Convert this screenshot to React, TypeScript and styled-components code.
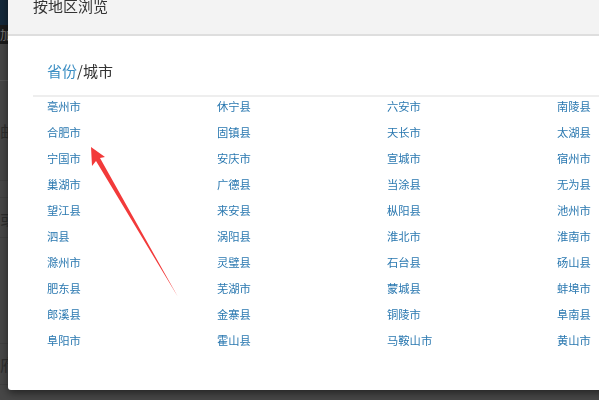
import styled, { createGlobalStyle } from 'styled-components';

const GlobalStyle = createGlobalStyle`
  html, body {
    margin: 0;
    padding: 0;
    width: 100%;
    height: 100%;
    overflow: hidden;
  }
  body {
    font-family: "Noto Sans CJK SC", "Noto Sans", sans-serif;
    background: #474747;
  }
`;

const cities: string[][] = [
  ['亳州市', '休宁县', '六安市', '南陵县'],
  ['合肥市', '固镇县', '天长市', '太湖县'],
  ['宁国市', '安庆市', '宣城市', '宿州市'],
  ['巢湖市', '广德县', '当涂县', '无为县'],
  ['望江县', '来安县', '枞阳县', '池州市'],
  ['泗县', '涡阳县', '淮北市', '淮南市'],
  ['滁州市', '灵璧县', '石台县', '砀山县'],
  ['肥东县', '芜湖市', '蒙城县', '蚌埠市'],
  ['郎溪县', '金寨县', '铜陵市', '阜南县'],
  ['阜阳市', '霍山县', '马鞍山市', '黄山市'],
];

// 모달 뒤에 깔린 페이지 (어둡게 덮인 상태)
const Backdrop = styled.div`
  display: flex;
  flex-direction: column;
  height: 100vh;
`;
const NavBar = styled.div`
  height: 25px;
  background: #14283a;
`;
const SubBar = styled.div`
  height: 19px;
  background: #1b1b1b;
  color: #777;
  font-size: 12px;
  line-height: 19px;
`;
const PageRow = styled.div<{ $h: number; $line?: string }>`
  height: ${({ $h }) => $h}px;
  border-bottom: 1px solid ${({ $line }) => $line || '#404040'};
  color: #2e2e2e;
  font-size: 16px;
  display: flex;
  align-items: center;
`;

const Modal = styled.div`
  position: fixed;
  left: 8px;
  top: -12px;
  width: 640px;
  height: 402px;
  background: #fff;
  border-radius: 0 0 0 3px;
  box-shadow: 0 3px 9px rgba(0, 0, 0, 0.5);
  display: flex;
  flex-direction: column;
`;
const Header = styled.div`
  height: 48px;
  box-sizing: border-box;
  padding: 7px 25px;
  background: #f3f3f3;
  border-bottom: 2px solid #dedede;
`;
const Title = styled.div`
  font-size: 15px;
  line-height: 22px;
  color: #333;
`;
const Body = styled.div`
  padding: 24px 0 0 25px;
`;
const SectionTitle = styled.div`
  font-size: 15px;
  line-height: 22px;
  color: #333;
  padding-left: 14px;
  padding-bottom: 13px;
  border-bottom: 2px solid #eeeeee;
`;
const Accent = styled.span`
  color: #3d8fc4;
`;
const CityGrid = styled.div`
  display: grid;
  grid-template-columns: repeat(4, 170px);
  row-gap: 8px;
  padding-left: 14px;
`;
const CityLink = styled.a`
  font-size: 11.3px;
  line-height: 18px;
  color: #2a78b0;
  text-decoration: none;
  white-space: nowrap;
`;

const Arrow = styled.svg`
  position: fixed;
  left: 0;
  top: 0;
  pointer-events: none;
`;

export default function App() {
  return (
    <>
      <GlobalStyle />
      <Backdrop>
        <NavBar />
        <SubBar>加台</SubBar>
        <PageRow $h={36} $line="#555" />
        <PageRow $h={99}>邮</PageRow>
        <PageRow $h={16} />
        <PageRow $h={39}>或</PageRow>
        <PageRow $h={105} />
        <PageRow $h={40}>府</PageRow>
      </Backdrop>
      <Modal>
        <Header>
          <Title>按地区浏览</Title>
        </Header>
        <Body>
          <SectionTitle>
            <Accent>省份</Accent>/城市
          </SectionTitle>
          <CityGrid>
            {cities.flat().map((name) => (
              <CityLink key={name} href="#">
                {name}
              </CityLink>
            ))}
          </CityGrid>
        </Body>
      </Modal>
      <Arrow width="599" height="400" viewBox="0 0 599 400">
        <polygon points="91,147 92,166 96,161 178,297 100,158 105,157" fill="#f23a3a" />
      </Arrow>
    </>
  );
}
